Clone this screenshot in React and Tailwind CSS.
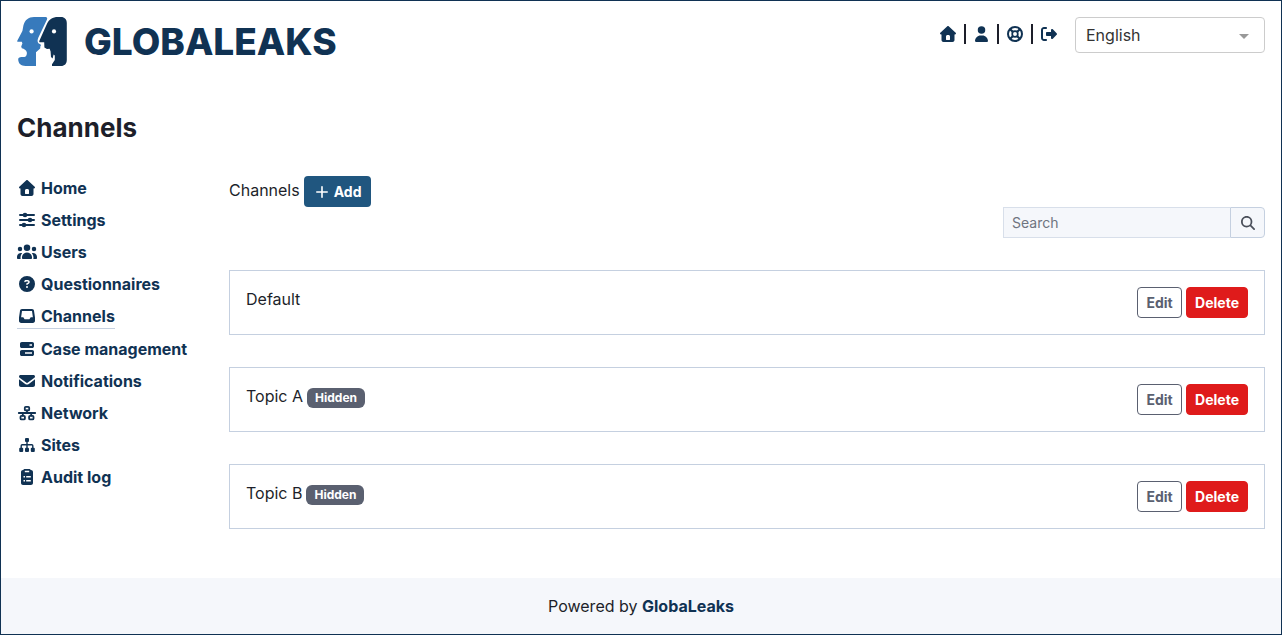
import React, { useState } from "react";
import { FaCircleQuestion, FaRightFromBracket } from "react-icons/fa6";

function Glyph({ box, d, className }) {
  return (
    <svg viewBox={box} fill="currentColor" aria-hidden="true" className={className}>
      <path fillRule="evenodd" d={d} />
    </svg>
  );
}

function HouseIcon({ className }) {
  return (
    <Glyph
      className={className}
      box="0 0 512 512"
      d="M277.8 8.6c-12.3-11.4-31.3-11.4-43.5 0l-224 208c-9.6 9-12.8 22.9-8 35.1S18.8 272 32 272l16 0 0 176c0 35.3 28.7 64 64 64l288 0c35.3 0 64-28.7 64-64l0-176 16 0c13.2 0 25-8.1 29.8-20.3s1.6-26.2-8-35.1l-224-208zM240 288h32c26.5 0 48 21.5 48 48v96c0 8-6 14-14 14h-100c-8 0-14-6-14-14v-96c0-26.5 21.5-48 48-48z"
    />
  );
}

function UserIcon({ className }) {
  return (
    <Glyph
      className={className}
      box="0 0 448 512"
      d="M224 248a120 120 0 1 0 0-240 120 120 0 1 0 0 240zm-29.7 56C95.8 304 16 383.8 16 482.3 16 498.7 29.3 512 45.7 512l356.6 0c16.4 0 29.7-13.3 29.7-29.7 0-98.5-79.8-178.3-178.3-178.3l-59.4 0z"
    />
  );
}

function UsersIcon({ className }) {
  return (
    <Glyph
      className={className}
      box="0 0 640 512"
      d="M320 16a104 104 0 1 1 0 208 104 104 0 1 1 0-208zM96 88a72 72 0 1 1 0 144 72 72 0 1 1 0-144zM0 416c0-70.7 57.3-128 128-128 12.8 0 25.2 1.9 36.9 5.4-32.9 36.8-52.9 85.4-52.9 138.6l0 16c0 11.4 2.4 22.2 6.7 32L32 480c-17.7 0-32-14.3-32-32l0-32zm521.3 64c4.3-9.8 6.7-20.6 6.7-32l0-16c0-53.2-20-101.8-52.9-138.6 11.7-3.5 24.1-5.4 36.9-5.4 70.7 0 128 57.3 128 128l0 32c0 17.7-14.3 32-32 32l-86.7 0zM472 160a72 72 0 1 1 144 0 72 72 0 1 1 -144 0zM160 432c0-88.4 71.6-160 160-160s160 71.6 160 160l0 16c0 17.7-14.3 32-32 32l-256 0c-17.7 0-32-14.3-32-32l0-16z"
    />
  );
}

function SearchIcon({ className }) {
  return (
    <Glyph
      className={className}
      box="0 0 512 512"
      d="M416 208c0 45.9-14.9 88.3-40 122.7L502.6 457.4c12.5 12.5 12.5 32.8 0 45.3s-32.8 12.5-45.3 0L330.7 376C296.3 401.1 253.9 416 208 416 93.1 416 0 322.9 0 208S93.1 0 208 0 416 93.1 416 208zM208 352a144 144 0 1 0 0-288 144 144 0 1 0 0 288z"
    />
  );
}

function PlusIcon({ className }) {
  return (
    <svg viewBox="0 0 12 12" fill="none" stroke="currentColor" strokeWidth="1.6" strokeLinecap="round" aria-hidden="true" className={className}>
      <path d="M6 0.8V11.2M0.8 6H11.2" />
    </svg>
  );
}

function LifeRingIcon({ className }) {
  return (
    <svg viewBox="0 0 16 16" fill="none" stroke="currentColor" aria-hidden="true" className={className}>
      <circle cx="8" cy="8" r="7" strokeWidth="2" />
      <circle cx="8" cy="8" r="2.8" strokeWidth="1.7" />
      <path d="M3.2 3.2L6 6M12.8 3.2L10 6M3.2 12.8L6 10M12.8 12.8L10 10" strokeWidth="2.2" />
    </svg>
  );
}

function SlidersIcon({ className }) {
  return (
    <svg viewBox="0 0 16 16" aria-hidden="true" className={className}>
      <path d="M1 3H15M1 8H15M1 13H15" fill="none" stroke="currentColor" strokeWidth="2" strokeLinecap="round" />
      <g fill="currentColor">
        <circle cx="6" cy="3" r="2.3" />
        <circle cx="11" cy="8" r="2.3" />
        <circle cx="5" cy="13" r="2.3" />
      </g>
    </svg>
  );
}

function InboxIcon({ className }) {
  return (
    <Glyph
      className={className}
      box="0 0 16 16"
      d="M3 1H13C14.1 1 14.9 1.7 15 2.8L16 9.5V12.8C16 14.1 15.1 15 13.8 15H2.2C0.9 15 0 14.1 0 12.8V9.5L1 2.8C1.1 1.7 1.9 1 3 1ZM3 3L2.1 9.2H4.3L5.6 11.3H10.4L11.7 9.2H13.9L13 3Z"
    />
  );
}

function ServerIcon({ className }) {
  return (
    <Glyph
      className={className}
      box="0 0 16 16"
      d="M2.8 1H13.2C14.2 1 15 1.8 15 2.8V5.2C15 6.2 14.2 7 13.2 7H2.8C1.8 7 1 6.2 1 5.2V2.8C1 1.8 1.8 1 2.8 1ZM10.5 3.2V4.8H13V3.2ZM2.8 9H13.2C14.2 9 15 9.8 15 10.8V13.2C15 14.2 14.2 15 13.2 15H2.8C1.8 15 1 14.2 1 13.2V10.8C1 9.8 1.8 9 2.8 9ZM6 11.2V12.8H13V11.2Z"
    />
  );
}

function EnvelopeIcon({ className }) {
  return (
    <Glyph
      className={className}
      box="0 0 16 16"
      d="M1.5 2H14.5C15.3 2 16 2.7 16 3.5C16 4 15.8 4.4 15.4 4.7L8.9 9.6C8.4 10 7.6 10 7.1 9.6L0.6 4.7C0.2 4.4 0 4 0 3.5C0 2.7 0.7 2 1.5 2ZM0 6.2L6.2 10.9C7.3 11.7 8.7 11.7 9.8 10.9L16 6.2V12C16 13.1 15.1 14 14 14H2C0.9 14 0 13.1 0 12Z"
    />
  );
}

function NetworkIcon({ className }) {
  return (
    <svg viewBox="0 0 20 16" fill="none" stroke="currentColor" strokeWidth="1.8" strokeLinecap="round" aria-hidden="true" className={className}>
      <rect x="7.8" y="1.8" width="4.4" height="3.6" rx="1" />
      <rect x="3.5" y="10.8" width="4.4" height="3.6" rx="1" />
      <rect x="12.1" y="10.8" width="4.4" height="3.6" rx="1" />
      <path d="M1.8 8H18.2M10 5.5V8M5.8 8V10.5M14.2 8V10.5" />
    </svg>
  );
}

function SitemapIcon({ className }) {
  return (
    <svg viewBox="0 0 16 16" aria-hidden="true" className={className}>
      <path d="M8 4V12M2.2 12V8.7C2.2 8.1 2.5 7.7 3.2 7.7H12.8C13.5 7.7 13.8 8.1 13.8 8.7V12" fill="none" stroke="currentColor" strokeWidth="1.4" />
      <g fill="currentColor">
        <rect x="6" y="1" width="4" height="4" rx="1" />
        <rect x="0.2" y="10.8" width="4" height="4.2" rx="1" />
        <rect x="6" y="10.8" width="4" height="4.2" rx="1" />
        <rect x="11.8" y="10.8" width="4" height="4.2" rx="1" />
      </g>
    </svg>
  );
}

function ClipboardIcon({ className }) {
  return (
    <Glyph
      className={className}
      box="0 0 16 16"
      d="M5.5 0H10.5C11 0 11.5 0.4 11.7 1H12C13.1 1 14 1.9 14 3V14C14 15.1 13.1 16 12 16H4C2.9 16 2 15.1 2 14V3C2 1.9 2.9 1 4 1H4.3C4.5 0.4 5 0 5.5 0ZM5.8 1.8V3.2H10.2V1.8ZM4.5 7V8.5H6V7ZM7.2 7V8.5H11.8V7ZM4.5 11V12.5H6V11ZM7.2 11V12.5H11.8V11Z"
    />
  );
}

function LogoMark() {
  return (
    <svg viewBox="0 0 50 50" aria-hidden="true" className="size-[50px]">
      <path
        fill="#377abc"
        d="M17 0H28.5C30 0 30.6 1 30 2.4L21.4 20.6C20.4 22.8 20.2 25 21.4 26.2L23.6 27.4C24.2 28 24 28.6 23.4 29.2L23.2 31.6L19 35.2V49H8.5C4 49 1.5 46.6 1.2 42.8C1 40.8 2.4 40 4.6 40H7.4C9.4 39.6 10.2 37.4 9.8 35.2C9.3 33 7.2 31.8 4.8 31.2L4.2 29.4L5.4 26.4L4.8 24.8H1C0.2 24.8 0 24.2 0.4 23.4L5.4 14L6.4 8.4C8 3 11.4 0 17 0Z"
      />
      <path
        fill="#103253"
        d="M41 0H44C47.6 0 49.8 2.4 49.8 6V43C49.8 46.8 47.6 49 44 49H35V47.2L37.8 43V38.4L36.6 37.4L35.6 41.4L34 40L33.6 34.4L32.6 31.8L30 32L27.4 30.6L27.2 25.2H23.2C22.2 25.2 22 24.4 22.5 23.4L30 6.8C32.2 2.2 35.4 0 41 0Z"
      />
      <circle cx="14.6" cy="14.4" r="2.1" fill="#fff" />
      <circle cx="37" cy="14.4" r="2.1" fill="#fff" />
    </svg>
  );
}

const navItems = [
  { label: "Home", Icon: HouseIcon },
  { label: "Settings", Icon: SlidersIcon },
  { label: "Users", Icon: UsersIcon, wide: true },
  { label: "Questionnaires", Icon: FaCircleQuestion },
  { label: "Channels", Icon: InboxIcon, active: true },
  { label: "Case management", Icon: ServerIcon },
  { label: "Notifications", Icon: EnvelopeIcon },
  { label: "Network", Icon: NetworkIcon, wide: true },
  { label: "Sites", Icon: SitemapIcon },
  { label: "Audit log", Icon: ClipboardIcon },
];

const channels = [
  { name: "Default", hidden: false },
  { name: "Topic A", hidden: true },
  { name: "Topic B", hidden: true },
];

function Divider() {
  return <span aria-hidden="true" className="h-5 w-0.5 bg-[#1d1f2a]" />;
}

function Header() {
  return (
    <header className="flex items-start justify-between">
      <a href="#home" className="flex items-center gap-[17px] text-[#103253]">
        <LogoMark />
        <span className="text-[37px] leading-10 font-extrabold">GLOBALEAKS</span>
      </a>
      <div className="flex items-start">
        <nav aria-label="Account" className="mr-[18px] flex h-[34px] items-center gap-2 text-[#103253]">
          <a href="#home" aria-label="Home"><HouseIcon className="size-4" /></a>
          <Divider />
          <a href="#preferences" aria-label="Preferences"><UserIcon className="h-4 w-[15px]" /></a>
          <Divider />
          <a href="#support" aria-label="Support"><LifeRingIcon className="size-4" /></a>
          <Divider />
          <a href="#logout" aria-label="Logout"><FaRightFromBracket className="size-4" /></a>
        </nav>
        <div className="relative w-[190px]">
          <select
            aria-label="Language"
            className="h-9 w-full appearance-none rounded border border-[#ccc] bg-white px-2.5 text-base text-[#333]"
          >
            <option>English</option>
          </select>
          <svg viewBox="0 0 10 5" aria-hidden="true" className="pointer-events-none absolute top-[17px] right-4 h-[5px] w-2.5">
            <path d="M0 0H10L5 5Z" fill="#999" />
          </svg>
        </div>
      </div>
    </header>
  );
}

function Sidebar() {
  return (
    <nav aria-label="Administration" className="w-1/6 shrink-0">
      <ul className="flex flex-col items-start gap-2">
        {navItems.map(({ label, Icon, active, wide }) => (
          <li key={label} className={active ? "border-b border-[#c5d0e0]" : ""}>
            <a
              href={"#" + label.toLowerCase().replace(" ", "-")}
              aria-current={active ? "page" : undefined}
              className="flex items-center gap-1 leading-6 font-bold whitespace-nowrap text-[#103253]"
            >
              <span className="flex w-5 justify-center">
                <Icon className={wide ? "h-4 w-5" : "size-4"} />
              </span>
              {label}
            </a>
          </li>
        ))}
      </ul>
    </nav>
  );
}

function ChannelCard({ name, hidden }) {
  return (
    <li className="flex items-start justify-between border border-[#c5d0e0] p-4">
      <div className="flex items-center gap-1 leading-6">
        <span>{name}</span>
        {hidden && (
          <span className="mt-1 rounded-md bg-[#5a6070] px-2 text-xs leading-5 font-bold text-white">Hidden</span>
        )}
      </div>
      <div className="flex gap-1 text-sm font-bold">
        <button type="button" className="h-[31px] w-[45px] rounded border border-[#5a6070] text-[#5a6070]">Edit</button>
        <button type="button" className="h-[31px] rounded border border-[#df1b1b] bg-[#df1b1b] px-2 text-white">Delete</button>
      </div>
    </li>
  );
}

export default function App() {
  const [query, setQuery] = useState("");
  const shown = channels.filter((c) => c.name.toLowerCase().includes(query.toLowerCase()));

  return (
    <div className="flex min-h-screen flex-col border border-[#103253] bg-white font-[Inter,sans-serif] text-base text-[#1d1f2a]">
      <div className="flex grow flex-col px-4 pt-4 pb-12">
        <Header />
        <h1 className="mt-11 text-[26px] leading-[34px] font-bold">Channels</h1>
        <div className="mt-[31px] flex items-start gap-1">
          <Sidebar />
          <main className="min-w-0 grow">
            <div className="flex items-start gap-1">
              <span className="leading-7">Channels</span>
              <button
                type="button"
                className="flex h-[31px] items-center gap-1.5 rounded bg-[#20567f] pr-2.5 pl-3 text-sm font-bold text-white"
              >
                <PlusIcon className="size-3" />
                Add
              </button>
            </div>
            <form className="ml-auto flex h-[31px] w-[262px]" onSubmit={(e) => e.preventDefault()}>
              <input
                type="text"
                aria-label="Search"
                placeholder="Search"
                value={query}
                onChange={(e) => setQuery(e.target.value)}
                className="min-w-0 grow border border-r-0 border-[#d8dfea] bg-[#f5f7fb] px-2 text-sm placeholder:text-[#6f7480]"
              />
              <button
                type="submit"
                aria-label="Search"
                className="flex w-[35px] shrink-0 items-center justify-center rounded-r border border-[#c5d0e0] bg-[#f5f7fb] text-[#4a4f5a]"
              >
                <SearchIcon className="size-3.5" />
              </button>
            </form>
            <ul className="mt-8 flex flex-col gap-8">
              {shown.map((c) => (
                <ChannelCard key={c.name} {...c} />
              ))}
            </ul>
          </main>
        </div>
      </div>
      <footer className="bg-[#f5f7fb] p-4 text-center leading-6">
        Powered by{" "}
        <a href="#globaleaks" className="font-bold text-[#103253]">GlobaLeaks</a>
      </footer>
    </div>
  );
}
